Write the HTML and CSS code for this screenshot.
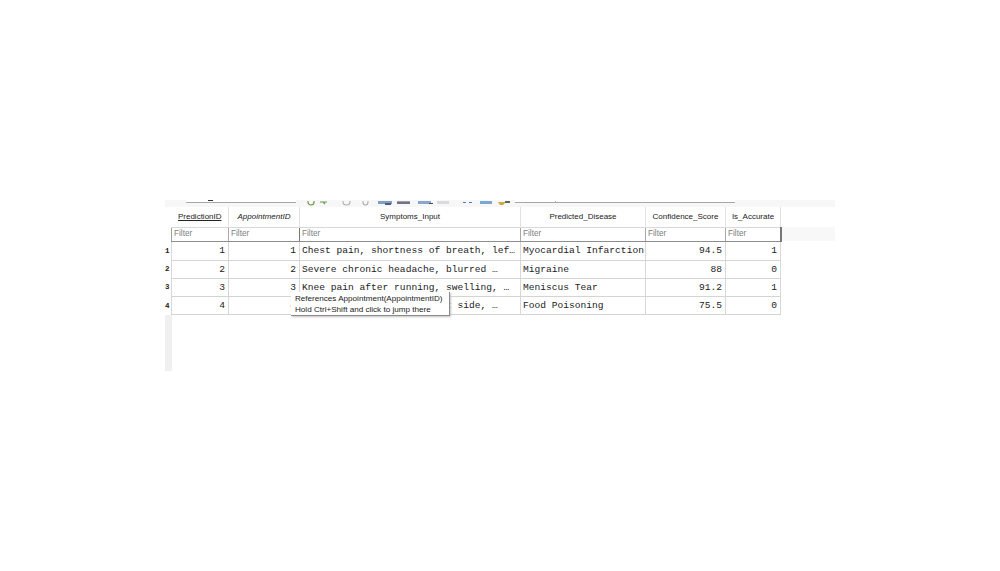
FILE: index.html
```html
<!DOCTYPE html>
<html lang="en">
<head>
<meta charset="utf-8">
<title>Predictions table</title>
<link rel="stylesheet" href="styles.css">
</head>
<body>
<div class="app">
  <div class="toolbar">
    <div class="tb-combo left"><span class="tb-tick"></span></div>
    <div class="tb-icons">
      <svg width="219" height="7" viewBox="0 0 219 7">
        <path d="M12 1v1a3 3 0 0 0 6 0V1" fill="none" stroke="#6f9a50" stroke-width="1.2"/>
        <path d="M24 2h7M27 2l2 2" fill="none" stroke="#6f9a50" stroke-width="1.1"/>
        <path d="M47 1v1a3.5 3 0 0 0 7 0V1" fill="none" stroke="#aeb0b0" stroke-width="1.1"/>
        <path d="M67 1v1a2.5 3 0 0 0 5 0V1" fill="none" stroke="#aeb0b0" stroke-width="1.1"/>
        <rect x="82" y="1" width="14" height="3" fill="#7f9fc8"/><rect x="89" y="3" width="6" height="2" fill="#4e5f78"/>
        <rect x="101" y="1" width="13" height="1" fill="#9aa0aa"/><rect x="101" y="2" width="13" height="2" fill="#6f7480"/>
        <rect x="122" y="1" width="13" height="3" fill="#8aa6cc"/><rect x="133" y="3" width="4" height="1" fill="#3e4a5e"/>
        <rect x="141" y="1" width="12" height="3" fill="#d8dadc"/>
        <rect x="167" y="2" width="3" height="1" fill="#5675b5"/><rect x="173" y="2" width="3" height="1" fill="#5675b5"/>
        <rect x="184" y="1" width="12" height="3" fill="#7aa8d6"/>
        <path d="M202 2h8l-3 3h-3z" fill="#d0a840"/><rect x="209" y="1" width="5" height="2" fill="#5a6a58"/>
      </svg>
    </div>
    <div class="tb-combo right"><span class="tb-dot"></span></div>
  </div>

  <div class="sheet">
    <div class="grid-wrap">
      <div class="gutter">
        <div class="gutter-head"></div>
        <div class="gutter-num r1">1</div>
        <div class="gutter-num r2">2</div>
        <div class="gutter-num r3">3</div>
        <div class="gutter-num r4">4</div>
        <div class="gutter-rest"></div>
      </div>
      <div class="table-area">
        <table class="grid">
          <colgroup>
            <col class="c1"><col class="c2"><col class="c3"><col class="c4"><col class="c5"><col class="c6">
          </colgroup>
          <thead>
            <tr class="head">
              <th class="pk">PredictionID</th>
              <th class="fk">AppointmentID</th>
              <th>Symptoms_Input</th>
              <th>Predicted_Disease</th>
              <th>Confidence_Score</th>
              <th>Is_Accurate</th>
            </tr>
            <tr class="filters">
              <td>Filter</td>
              <td class="active">Filter</td>
              <td>Filter</td>
              <td>Filter</td>
              <td>Filter</td>
              <td class="last">Filter</td>
            </tr>
          </thead>
          <tbody>
            <tr class="r1">
              <td class="num">1</td><td class="num">1</td>
              <td>Chest pain, shortness of breath, lef…</td>
              <td>Myocardial Infarction</td>
              <td class="num">94.5</td><td class="num">1</td>
            </tr>
            <tr class="r2">
              <td class="num">2</td><td class="num">2</td>
              <td>Severe chronic headache, blurred …</td>
              <td>Migraine</td>
              <td class="num">88</td><td class="num">0</td>
            </tr>
            <tr class="r3">
              <td class="num">3</td><td class="num">3</td>
              <td>Knee pain after running, swelling, …</td>
              <td>Meniscus Tear</td>
              <td class="num">91.2</td><td class="num">1</td>
            </tr>
            <tr class="r4">
              <td class="num">4</td><td class="num">4</td>
              <td>Stomach pain, nausea, left side, …</td>
              <td>Food Poisoning</td>
              <td class="num">75.5</td><td class="num">0</td>
            </tr>
          </tbody>
        </table>
        <div class="filter-strip"></div>
      </div>
    </div>
    <div class="tooltip">References Appointment(AppointmentID)<br>Hold Ctrl+Shift and click to jump there</div>
  </div>
</div>
</body>
</html>
```
FILE: styles.css
```css
* { box-sizing: border-box; }
html, body { margin: 0; padding: 0; background: #fff; }
body { height: 571px; overflow: hidden; padding: 200px 0 0 165px; }
.app { width: 670px; }

.toolbar {
  display: flex; align-items: flex-start; height: 7px;
  background: #f7f7f7; padding-left: 21px; overflow: hidden;
}
.tb-combo { height: 3px; border-bottom: 1px solid #a8a8a8; background: #fff; }
.tb-combo.left { width: 110px; }
.tb-combo.right { width: 220px; }
.tb-tick { display: block; width: 5px; height: 1px; margin-left: 22px; background: #333; }
.tb-dot { display: block; width: 1px; height: 1px; margin: 1px 0 0 40px; background: #aaa; }
.tb-icons { width: 219px; height: 7px; }
.tb-icons svg { display: block; }

.sheet { position: relative; }
.grid-wrap { display: flex; }
.gutter { width: 6px; flex: none; font: bold 7.5px/1 "Liberation Mono", monospace; color: #222; }
.gutter-head { height: 34px; }
.gutter-num { background: #fff; text-align: left; }
.gutter-num.r1 { height: 19px; line-height: 20px; }
.gutter-num.r2 { height: 18px; line-height: 19px; }
.gutter-num.r3 { height: 18px; line-height: 19px; }
.gutter-num.r4 { height: 19px; line-height: 20px; }
.gutter-rest { height: 56px; background: #f0f0f0; width: 7px; }

.table-area { position: relative; flex: 1; }
.grid { border-collapse: collapse; table-layout: fixed; width: 609px; position: relative; z-index: 1; background: #fff; }
.c1 { width: 57px; } .c2 { width: 71px; } .c3 { width: 221px; }
.c4 { width: 125px; } .c5 { width: 80px; } .c6 { width: 55px; }

.head th {
  height: 20px; padding: 0 0 1px; background: #fff;
  font: normal 8px/19px "Liberation Sans", Arial, sans-serif; color: #222;
  text-align: center; border-right: 1px solid #e2e2e2; white-space: nowrap; overflow: hidden;
}
.head th.pk { text-decoration: underline; }
.head th.fk { font-style: italic; }

.filters td {
  height: 14px; padding: 0 0 1px 2px; background: #fff;
  font: 8.2px/12px "Liberation Sans", Arial, sans-serif; color: #808080;
  border-top: 1px solid #d8d8d8; border-bottom: 1px solid #8e8e8e; border-right: 1px solid #a8a8a8;
}
.filters td:first-child { border-left: 1px solid #a0a0a0; }
.filters td.active { border-right-color: #777; border-left: 1px solid #999; }
.filters td.last { border-right: 2px solid #777; }

.grid tbody td {
  padding: 0 3px 0 2px; overflow: hidden; white-space: nowrap;
  font: 9.6px/1 "Liberation Mono", "Courier New", monospace; color: #222;
  border-right: 1px solid #d8d8d8; border-bottom: 1px solid #d4d4d4;
  vertical-align: middle;
}
.grid tbody td:first-child { border-left: 1px solid #d8d8d8; }
.grid tbody .num { text-align: right; }
tr.r1 td { height: 19px; } tr.r2 td, tr.r3 td, tr.r4 td { height: 18px; }

.filter-strip { position: absolute; left: 609px; top: 20px; width: 55px; height: 14px; background: #f8f8f8; }

.tooltip {
  position: absolute; left: 126px; top: 85px; z-index: 2; width: 159px; height: 24px;
  padding: 1px 0 0 4px; background: #fff;
  border-right: 1px solid #8a8a8a; border-bottom: 1px solid #8a8a8a;
  box-shadow: 1px 1px 2px #c4c4c4;
  font: 8.1px/11px "Liberation Sans", Arial, sans-serif; color: #222; white-space: nowrap;
}
```
